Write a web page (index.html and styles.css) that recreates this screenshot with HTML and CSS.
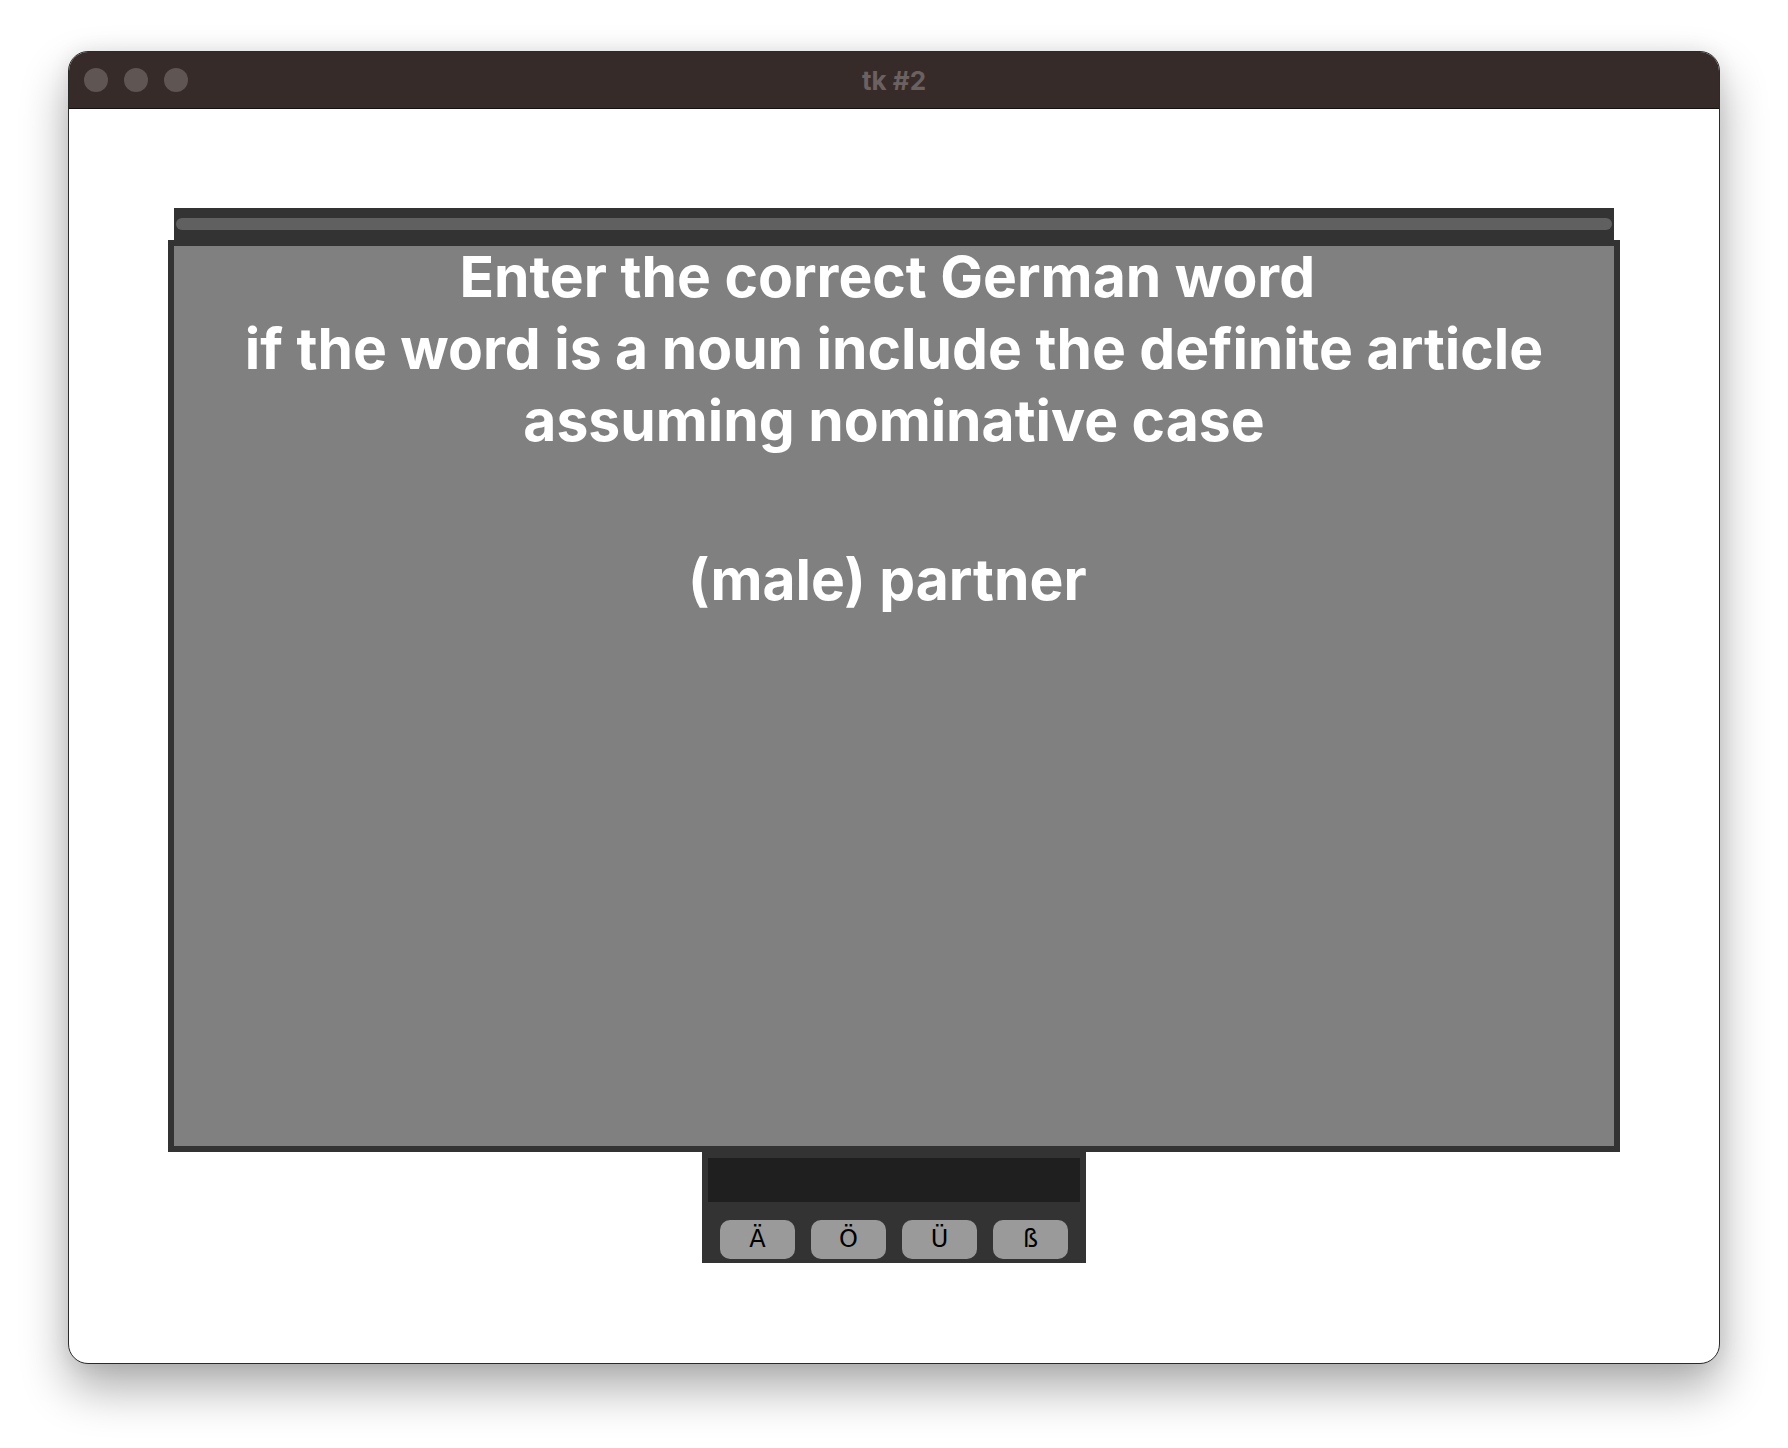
FILE: index.html
```html
<!DOCTYPE html>
<html>
<head>
<meta charset="utf-8">
<title>tk #2</title>
<link rel="stylesheet" href="styles.css">
</head>
<body>
<div class="window">
  <div class="titlebar">
    <div class="lights">
      <span class="light"></span>
      <span class="light"></span>
      <span class="light"></span>
    </div>
    <div class="title">tk #2</div>
  </div>
  <div class="content">
    <div class="stage">
      <div class="scrollbar"><div class="thumb"></div></div>
      <div class="panel">
        <div class="prompt">Enter the correct German word&nbsp;<br>if the word is a noun include the definite article<br>assuming nominative case</div>
        <div class="word">(male) partner&nbsp;</div>
      </div>
      <div class="entry">
        <div class="field"></div>
        <div class="keys">
          <button class="key">Ä</button>
          <button class="key">Ö</button>
          <button class="key">Ü</button>
          <button class="key">ß</button>
        </div>
      </div>
    </div>
  </div>
</div>
</body>
</html>
```

FILE: styles.css
```css
html, body {
  margin: 0;
  padding: 0;
  background: #ffffff;
}

body {
  box-sizing: border-box;
  min-height: 1448px;
  padding: 51px 68px 84px 68px;
  font-family: Inter, "Noto Sans", sans-serif;
}

.window {
  box-sizing: border-box;
  width: 1652px;
  height: 1313px;
  background: #ffffff;
  border: 1px solid #2a2a2a;
  border-radius: 20px;
  box-shadow: 0 24px 48px rgba(0, 0, 0, 0.33), 0 0 20px rgba(0, 0, 0, 0.08);
  overflow: hidden;
  display: flex;
  flex-direction: column;
}

.titlebar {
  height: 56px;
  flex: none;
  background: #372b2a;
  border-bottom: 1px solid #151010;
  display: flex;
  align-items: center;
  position: relative;
}

.lights {
  display: flex;
  gap: 16px;
  padding-left: 15px;
}

.light {
  width: 24px;
  height: 24px;
  border-radius: 50%;
  background: #5f5553;
}

.title {
  position: absolute;
  left: 0;
  right: 0;
  top: 0;
  bottom: 0;
  display: flex;
  align-items: center;
  justify-content: center;
  color: #6b6160;
  font-family: Inter, sans-serif;
  font-weight: 700;
  font-size: 26px;
}

.content {
  flex: 1;
  padding-top: 99px;
}

.stage {
  display: flex;
  flex-direction: column;
  align-items: center;
}

.scrollbar {
  box-sizing: border-box;
  width: 1440px;
  height: 38px;
  background: #333333;
  padding: 10px 2px 0 2px;
  margin-bottom: -6px;
  position: relative;
  z-index: 1;
}

.thumb {
  height: 12px;
  border-radius: 6px;
  background: #606060;
}

.panel {
  box-sizing: border-box;
  width: 1452px;
  height: 912px;
  background: #808080;
  border: 6px solid #333333;
  color: #ffffff;
  font-family: Inter, sans-serif;
  font-weight: 700;
  font-size: 57px;
  line-height: 72px;
  text-align: center;
}

.prompt {
  margin-top: -5px;
}

.word {
  margin-top: 87px;
}

.entry {
  box-sizing: border-box;
  width: 384px;
  background: #333333;
  padding: 6px 6px 4px 6px;
}

.field {
  height: 44px;
  background: #1f1f1f;
}

.keys {
  display: flex;
  gap: 16px;
  padding: 0 12px;
  margin-top: 18px;
}

.key {
  flex: 1;
  height: 39px;
  border: none;
  border-radius: 10px;
  background: #9a9a9a;
  color: #000000;
  font-family: "DejaVu Sans", sans-serif;
  font-size: 24px;
  padding: 0;
  margin: 0;
  line-height: 39px;
}
```
